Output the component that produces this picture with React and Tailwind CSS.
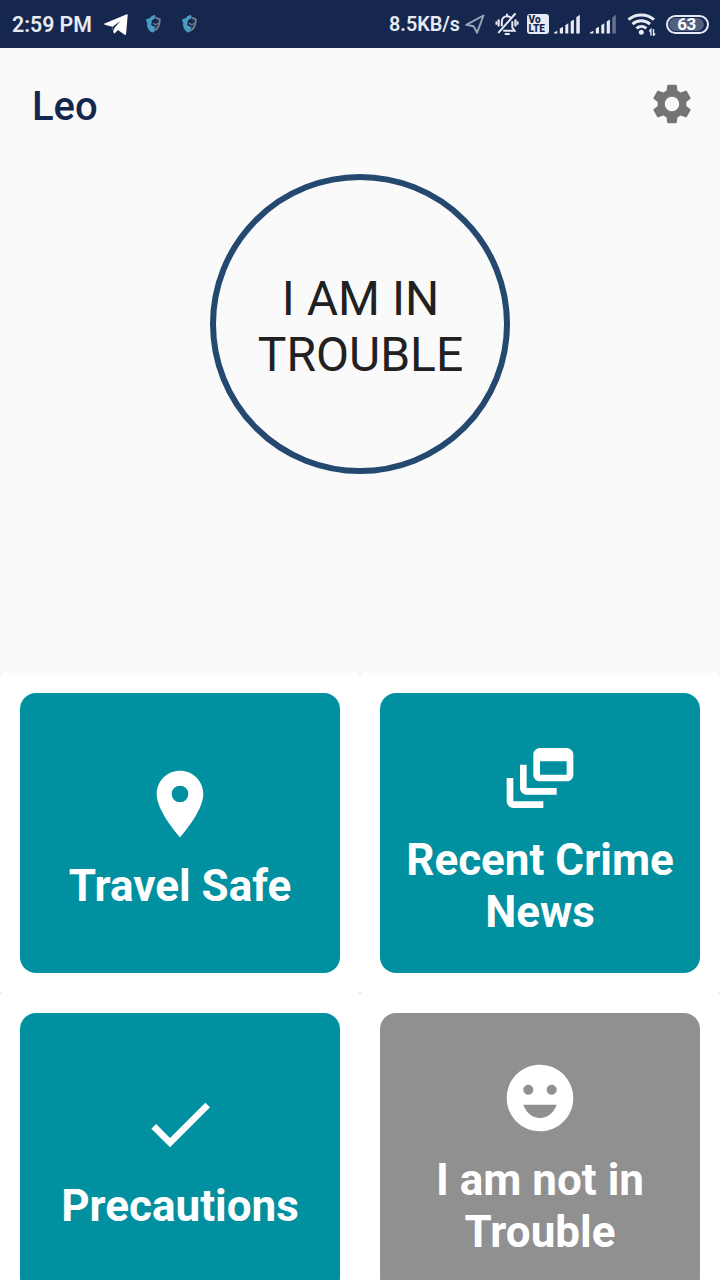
import React from "react";
import { MdSettings, MdLocationOn, MdDynamicFeed, MdCheck, MdEmojiEmotions } from "react-icons/md";

function TelegramIcon() {
  return (
    <svg className="h-6 w-6" viewBox="0 0 24 24" fill="#fff">
      <path d="M.6 11.600 22.800 2.300c.7-.3 1 .1.900.8l-1.600 18.900c-.1.900-.7 1.100-1.400.7l-6.800-4.600-2.800 2.900c-.7.7-1.300.4-1.500-.5L8.200 14.800.8 12.700c-.8-.3-.8-.8-.2-1.100Z" />
      <path d="M8.200 15 16.500 9l-6.200 6.900-.4 3.200Z" fill="#15274e" />
    </svg>
  );
}

function ShieldIcon() {
  return (
    <svg className="h-5 w-4" viewBox="0 0 16 20">
      <path d="M8.500 1.500 15 4.800v5c0 3.500-2 6.300-5 8.200l-2-1Z" fill="#34425f" />
      <path d="M11 3.500c1.500.9 3 1.500 4 1.700 0 5-1 8.300-5 11.300" stroke="#858b98" strokeWidth="1.300" fill="none" />
      <path d="M6.500 2 10 .8l.6 3-3.800 3-.6 4.200 3.800 2.500-1 4.500-2 .5C3.500 16.500 1.500 13 2.200 9L.8 5.500 5 4Z" fill="#4a9cc2" />
      <path d="m7.500 6.300 3-1.800 2.500 3.300-1 3.500-3.500.7-1.300-2Z" fill="#172846" />
      <path d="M8 9.500 11 10.500l2.500-1.200" stroke="#8d9aa9" fill="none" />
    </svg>
  );
}

function LocationArrow() {
  return (
    <svg className="h-5 w-5" viewBox="0 0 20 20" fill="none" stroke="#9aa4b9" strokeWidth="1.900" strokeLinejoin="round">
      <path d="M18.500 1.500 1.200 10.800l7.400 1.400 3.500 6.500Z" />
    </svg>
  );
}

function MutedBell() {
  return (
    <svg className="h-6 w-6" viewBox="0 0 24 24" fill="none" stroke="#e7eaf2" strokeWidth="2" strokeLinecap="round">
      <path d="M6.800 13.500V10c0-3.500 2.200-5.800 5.200-5.800 1.300 0 2.400.4 3.200 1.100M17.300 10v5.500l2.200 3.200H9" />
      <path d="M20 2 3.800 20.300" />
      <path d="M10.500 21.900h3.500M12 2.500V4" />
      <path d="M3.600 8.500v5M20.500 8.500v5" strokeWidth="2.300" />
      <path d="M1.300 10v2M22.800 10v2" strokeWidth="1.700" />
    </svg>
  );
}

function Signal({ weak }) {
  return (
    <svg className="h-5 w-[27px]" viewBox="0 0 27 20" fill="#e7eaf2">
      <path d="M0 19.500v-1L3.300 16.800v2.700ZM5.800 19.500v-5L9 12.700v6.800ZM11.300 19.500v-8.300l3-1.900v10.200ZM16.700 19.500V7.600l3.200-2.200v14.100Z" />
      <path d="M22.300 19.500V3.200L25.800.8v18.700Z" fill={weak ? "#66728e" : "#e7eaf2"} />
    </svg>
  );
}

function Wifi() {
  return (
    <svg className="h-6 w-[30px]" viewBox="0 0 30 24" fill="none" stroke="#e7eaf2" strokeWidth="3">
      <path d="M1.500 7.700c7-6.400 18.500-6.400 25.500 0M5.500 12.200c5-4.500 12.500-4.500 17.500 0M9.500 16.400c3-2.500 7-2.500 9.800 0" />
      <circle cx="14.300" cy="20.200" r="2.500" fill="#e7eaf2" stroke="none" />
      <path d="M23.900 23.500v-6l-1.600 2M26.500 17v6.500l1.600-2" strokeWidth="1.400" />
    </svg>
  );
}

function StatusBar() {
  return (
    <header className="flex h-12 items-center bg-[#15274e] text-[21.3px] leading-none font-semibold whitespace-nowrap text-[#e7eaf2]">
      <span className="ml-3 w-[80px] pt-0.5">2:59 PM</span>
      <div className="ml-3 flex items-center"><TelegramIcon /></div>
      <div className="ml-[17px] flex items-center gap-5">
        <ShieldIcon />
        <ShieldIcon />
      </div>
      <div className="ml-auto flex items-center pr-[11px]">
        <span className="w-[72px] pt-0.5 text-[19.8px]">8.5KB/s</span>
        <div className="ml-1"><LocationArrow /></div>
        <div className="ml-[10px]"><MutedBell /></div>
        <div className="ml-2 flex h-5 w-[22px] flex-col items-center justify-center rounded-[3px] bg-[#e7eaf2] text-[10px] leading-[9px] font-black text-[#15274e]">
          <span className="w-[19px]">Vo</span>
          <span className="w-[19px]">LTE</span>
        </div>
        <div className="ml-[5px]"><Signal /></div>
        <div className="ml-[9px]"><Signal weak /></div>
        <div className="ml-[10px]"><Wifi /></div>
        <div className="ml-[9px] flex h-[19px] w-[43px] items-center rounded-full border-2 border-[#e7eaf2] p-px">
          <div className="flex h-full w-[35px] items-center justify-center rounded-full bg-[#50607f] pt-px text-[17px] font-bold tracking-tight text-white">63</div>
        </div>
      </div>
    </header>
  );
}

const tiles = [
  { label: "Travel Safe", Icon: MdLocationOn, color: "bg-[#01909f]" },
  { label: "Recent Crime News", Icon: MdDynamicFeed, color: "bg-[#01909f]" },
  { label: "Precautions", Icon: MdCheck, color: "bg-[#01909f]" },
  { label: "I am not in Trouble", Icon: MdEmojiEmotions, color: "bg-[#909090]" },
];

function Tile({ label, Icon, color }) {
  return (
    <div className="h-80 rounded bg-white p-5">
      <button className={`flex h-full w-full flex-col items-center justify-center gap-[17px] rounded-2xl px-5 pt-[10px] text-white ${color}`}>
        <Icon className="size-20 shrink-0" />
        <span className="text-[44px] leading-[51.2px] font-bold">{label}</span>
      </button>
    </div>
  );
}

export default function App() {
  return (
    <div className="flex h-[1280px] w-[720px] flex-col overflow-hidden bg-[#fafafa] font-['Roboto',sans-serif]">
      <StatusBar />
      <main className="flex min-h-0 flex-1 flex-col">
        <section className="flex h-[625px] shrink-0 flex-col items-center">
          <div className="flex h-[126px] w-full items-start justify-between pt-8 pr-6 pl-8">
            <h1 className="pt-0.5 text-[40px] leading-[50px] font-medium text-[#15274e]">Leo</h1>
            <button aria-label="Settings"><MdSettings className="size-12 text-[#757575]" /></button>
          </div>
          <button className="flex size-[300px] items-center justify-center rounded-full border-6 border-[#24486f] pt-[6px] pl-px text-center text-[48px] leading-[56.2px] text-[#212121]">
            <span className="w-[220px]">I AM IN TROUBLE</span>
          </button>
        </section>
        <section className="grid shrink-0 grid-cols-2 bg-[#ececec]">
          {tiles.map((tile) => <Tile key={tile.label} {...tile} />)}
        </section>
      </main>
    </div>
  );
}
